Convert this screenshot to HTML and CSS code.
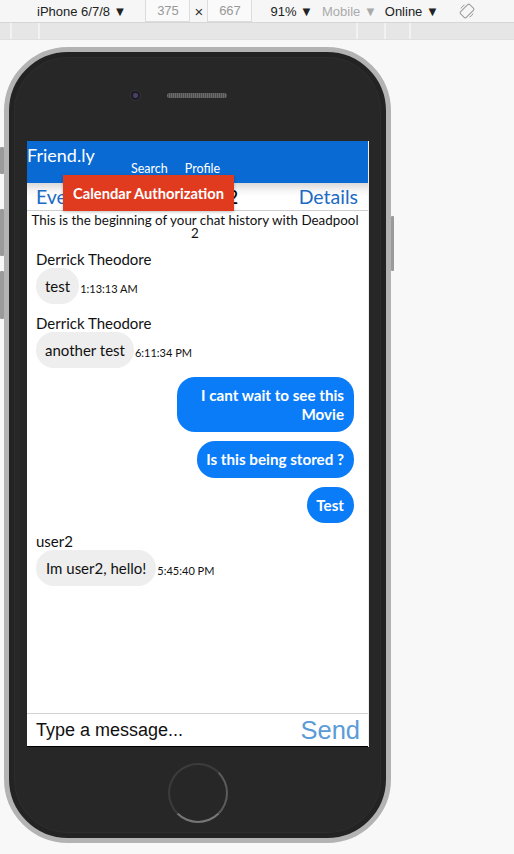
FILE: index.html
```html
<!DOCTYPE html>
<html>
<head>
<meta charset="utf-8">
<link rel="stylesheet" href="styles.css">
</head>
<body>
<div class="toolbar">
  <span class="tb-device">iPhone 6/7/8 ▼</span>
  <span class="tb-box">375</span>
  <span class="tb-x">×</span>
  <span class="tb-box">667</span>
  <span class="tb-zoom">91% ▼</span>
  <span class="tb-mobile">Mobile ▼</span>
  <span class="tb-online">Online ▼</span>
  <svg class="tb-rotate" width="16" height="16" viewBox="0 0 16 16"><g fill="none" stroke="#999" stroke-width="1"><rect x="4" y="1.5" width="8" height="13" rx="1.5" transform="rotate(45 8 8)"/><path d="M2 5.5 A6.5 6.5 0 0 1 5.5 2"/><path d="M14 10.5 A6.5 6.5 0 0 1 10.5 14"/></g></svg>
</div>
<div class="ruler">
  <span class="rl rl1"></span><span class="rl rl2"></span><span class="rl rl3"></span><span class="rl rl4"></span><span class="rl rl5"></span>
</div>
<div class="stage">
  <div class="phone">
    <span class="side-btn sb1"></span>
    <span class="side-btn sb2"></span>
    <span class="side-btn sb3"></span>
    <span class="side-btn sb4"></span>
    <div class="phone-top">
      <span class="camera"></span>
      <span class="speaker"></span>
    </div>
    <div class="screen">
      <div class="header">
        <div class="brand">Friend.ly</div>
        <div class="links"><span>Search</span><span>Profile</span></div>
      </div>
      <div class="nav">
        <span class="nav-link">Events</span>
        <span class="nav-title">Deadpool 2</span>
        <span class="nav-logout">Logout</span>
        <span class="nav-link nav-details">Details</span>
      </div>
      <div class="cal-auth">Calendar Authorization</div>
      <div class="chat">
        <p class="intro">This is the beginning of your chat history with Deadpool 2</p>
        <div class="msg in first-in">
          <div class="sender">Derrick Theodore</div>
          <div class="row"><span class="bubble grey">test</span><span class="time">1:13:13 AM</span></div>
        </div>
        <div class="msg in">
          <div class="sender">Derrick Theodore</div>
          <div class="row"><span class="bubble grey">another test</span><span class="time">6:11:34 PM</span></div>
        </div>
        <div class="msg out"><span class="bubble blue wide">I cant wait to see this Movie</span></div>
        <div class="msg out"><span class="bubble blue">Is this being stored ?</span></div>
        <div class="msg out"><span class="bubble blue">Test</span></div>
        <div class="msg in user2">
          <div class="sender">user2</div>
          <div class="row"><span class="bubble grey">Im user2, hello!</span><span class="time">5:45:40 PM</span></div>
        </div>
      </div>
      <div class="composer">
        <span class="placeholder">Type a message...</span>
        <span class="send">Send</span>
      </div>
    </div>
    <div class="phone-bottom">
      <span class="home"></span>
    </div>
  </div>
</div>
</body>
</html>
```
FILE: styles.css
```css
* { box-sizing: border-box; }
html, body { margin: 0; padding: 0; }
body {
  background: #f8f8f8;
  font-family: "Liberation Sans", Arial, sans-serif;
  width: 514px;
  height: 854px;
  overflow: hidden;
}
.toolbar {
  height: 23px;
  background: #f6f6f6;
  border-bottom: 1px solid #d6d6d6;
  display: flex;
  align-items: center;
  font-size: 13px;
  color: #222;
  padding-left: 37px;
}
.tb-device { margin-right: 19px; }
.tb-box {
  width: 45px;
  height: 22px;
  background: #fafafa;
  border: 1px solid #dcdcdc;
  border-top: none;
  color: #999;
  display: flex;
  align-items: center;
  justify-content: center;
}
.tb-x { width: 17px; text-align: center; font-size: 15px; color: #333; }
.tb-zoom { margin-left: 18px; }
.tb-mobile { margin-left: 9px; color: #aaa; }
.tb-online { margin-left: 8px; }
.tb-rotate { margin-left: 20px; }
.ruler {
  height: 17px;
  background: #e6e6e6;
  border-bottom: 1px solid #e0e0e0;
  position: relative;
}
.rl { position: absolute; top: 0; bottom: 0; width: 2px; background: #f2f2f2; }
.rl1 { left: 10px; } .rl2 { left: 38px; } .rl3 { left: 356px; } .rl4 { left: 384px; } .rl5 { left: 409px; }
.stage { padding: 7px 0 0 4px; }
.phone {
  position: relative;
  width: 387px;
  height: 796px;
  border: 5px solid #b3b3b3;
  border-radius: 64px;
  background: #272727;
  box-shadow: inset 0 0 0 5px #232323, inset 0 0 0 6px #2d2d2d;
  display: flex;
  flex-direction: column;
}
.side-btn { position: absolute; background: #9a9a9a; border-radius: 1px; }
.sb1 { left: -9px; top: 95px; width: 4px; height: 27px; }
.sb2 { left: -9px; top: 157px; width: 4px; height: 47px; }
.sb3 { left: -9px; top: 219px; width: 4px; height: 48px; }
.sb4 { right: -8px; top: 164px; width: 3px; height: 55px; }
.phone-top {
  height: 89px;
  display: flex;
  align-items: flex-start;
  padding: 39px 0 0 122px;
  gap: 27px;
}
.camera {
  width: 9px; height: 9px; border-radius: 50%;
  background: radial-gradient(circle at 50% 50%, #4b3f66 0 2px, #1c1a22 3px);
  box-shadow: 0 0 0 1px #333;
}
.speaker {
  margin-top: 2px;
  width: 60px; height: 5px; border-radius: 3px;
  background: repeating-linear-gradient(90deg, #6a6a6a 0 1px, #4e4e4e 1px 2px);
}
.screen {
  margin-left: 18px;
  width: 342px;
  height: 606px;
  background: #fff;
  position: relative;
  display: flex;
  flex-direction: column;
  font-family: "Lato", "Noto Sans", sans-serif;
  border-right: 1px solid #eee;
}
.header {
  height: 42px;
  background: #0a6ad3;
  color: #fff;
}
.brand { font-size: 18px; padding-top: 5px; line-height: 18px; }
.links { display: flex; gap: 17px; padding-left: 104px; font-size: 12.5px; line-height: 14px; margin-top: -2px; }
.nav {
  height: 28px;
  display: flex;
  align-items: center;
  padding: 0 10px 0 9px;
  border-bottom: 1px solid #cfcfcf;
  background: linear-gradient(#d9d9d9, #f6f6f6 8px, #fff 14px);
  font-size: 19.5px;
}
.nav-link { color: #1c6bc4; }
.nav-title { margin-left: auto; color: #000; }
.nav-logout { margin-left: 11px; font-size: 12px; color: #fff; }
.nav-details { margin-left: 13px; }
.cal-auth {
  position: absolute;
  left: 36px;
  top: 34px;
  width: 171px;
  height: 36px;
  background: #e03a1f;
  color: #fff;
  font-weight: bold;
  font-size: 14.7px;
  display: flex;
  align-items: center;
  justify-content: center;
  box-shadow: 0 1px 3px rgba(0,0,0,0.25);
}
.chat { flex: 1; padding: 0 14px 0 9px; }
.intro { margin: 3px -5px 0 -5px; font-size: 13.4px; line-height: 13px; text-align: center; color: #111; }
.msg { display: flex; flex-direction: column; }
.sender { font-size: 15px; line-height: 18px; margin-top: 10px; color: #111; }
.first-in .sender { margin-top: 10px; }
.row { display: flex; align-items: center; }
.bubble {
  display: inline-block;
  border-radius: 18px;
  font-size: 15px;
  line-height: 18px;
  padding: 9px 9px;
}
.grey { background: #eeeeee; color: #111; }
.time { font-size: 11px; margin-left: 1px; padding-top: 4px; color: #111; }
.out { align-items: flex-end; margin-top: 9px; }
.blue { background: #0b7cf8; color: #fff; font-weight: bold; font-size: 15.2px; line-height: 18.5px; padding: 9px 10px 9px 9px; text-align: right; }
.wide { max-width: 177px; }
.user2 .sender { margin-top: 9px; }
.user2 .bubble { padding: 9px 10px; }
.composer {
  height: 34px;
  border-top: 1px solid #d3d3d3;
  display: flex;
  align-items: center;
  justify-content: space-between;
  padding: 0 8px 0 9px;
  font-family: "Liberation Sans", Arial, sans-serif;
  border-bottom: 1px solid #000;
}
.placeholder { font-size: 18px; color: #111; }
.send { font-size: 25.5px; color: #5b9bd6; }
.phone-bottom { display: flex; justify-content: center; padding-top: 16px; }
.home {
  width: 60px; height: 60px; border-radius: 50%;
  border: 2px solid #3c3c3c;
  border-right-color: #5c5c5c;
  border-bottom-color: #777;
}
```
